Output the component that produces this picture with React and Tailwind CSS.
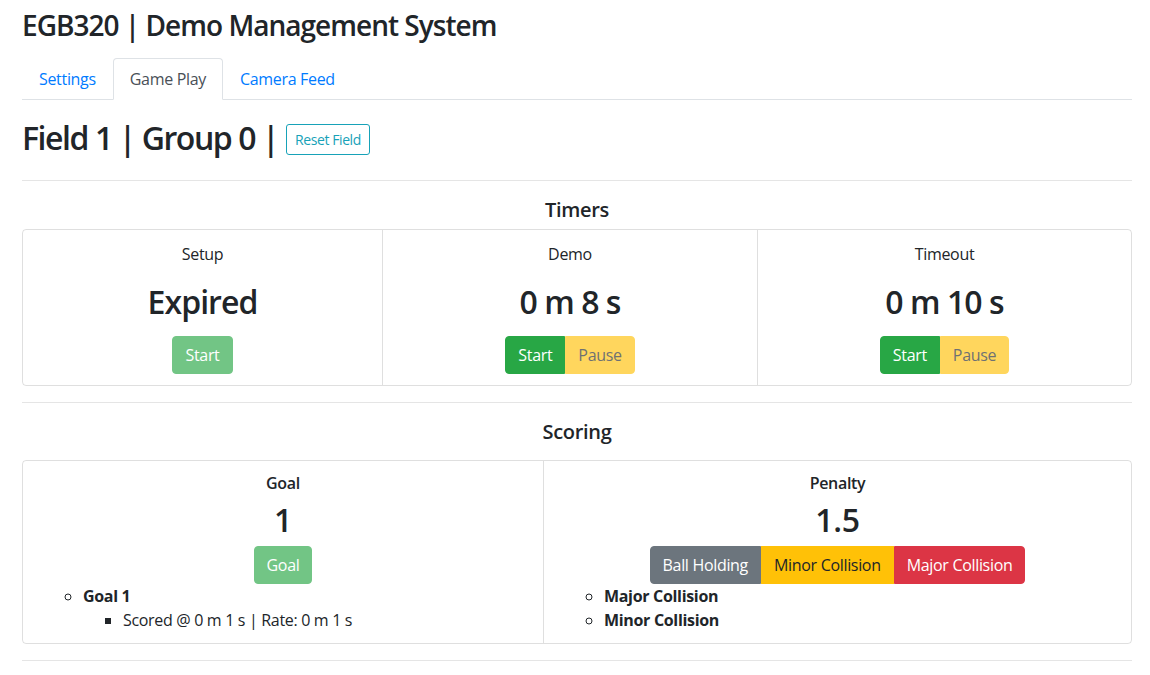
export default function App() {
  const btn = "px-3 py-[6px] text-[16px] leading-6 border";
  return (
    <div className="min-h-screen bg-white text-[#212529] font-['Open_Sans',sans-serif] tracking-[-0.02em]">
      <div className="ml-[22px] w-[1110px] pt-[8px]">
        <h3 className="text-[28px] font-semibold leading-[34px] h-[34px] tracking-[-0.035em]">EGB320 | Demo Management System</h3>
        <nav className="mt-[16px] flex border-b border-[#dee2e6] h-[42px]">
          <a className="px-4 py-2 text-[16px] leading-6 text-[#007bff] border border-transparent rounded-t-[4px] -mb-px">Settings</a>
          <a className="px-4 py-2 text-[16px] leading-6 text-[#495057] bg-white border border-[#dee2e6] border-b-white rounded-t-[4px] -mb-px">Game Play</a>
          <a className="px-4 py-2 text-[16px] leading-6 text-[#007bff] border border-transparent rounded-t-[4px] -mb-px">Camera Feed</a>
        </nav>
        <div className="mt-[19px] flex items-start">
          <h2 className="text-[32px] font-semibold leading-[38px] tracking-[-0.045em]">Field 1 | Group 0 |</h2>
          <button className="ml-[8px] mt-[5px] px-2 py-1 text-[14px] leading-[21px] tracking-[-0.03em] border border-[#17a2b8] text-[#17a2b8] rounded-[3px]">Reset Field</button>
        </div>
        <hr className="mt-[23px] border-t border-[rgba(0,0,0,0.1)]" />
        <h5 className="mt-[17px] text-[20px] leading-6 font-semibold text-center">Timers</h5>
        <div className="mt-[7px] flex border border-[rgba(0,0,0,0.125)] rounded-[4px]">
          <div className="w-[359px] flex flex-col items-center pt-[12px] pb-[11px]">
            <div className="text-[16px] leading-6">Setup</div>
            <h2 className="mt-[17px] text-[32px] font-semibold leading-[38px] tracking-[-0.03em]">Expired</h2>
            <div className="mt-[15px] flex">
              <button className={`${btn} bg-[#28a745] border-[#28a745] text-white rounded-[4px] opacity-[.65]`}>Start</button>
            </div>
          </div>
          <div className="w-[375px] border-l border-[rgba(0,0,0,0.125)] flex flex-col items-center pt-[12px] pb-[11px]">
            <div className="text-[16px] leading-6">Demo</div>
            <h2 className="mt-[17px] text-[32px] font-semibold leading-[38px] tracking-[-0.03em]">0 m 8 s</h2>
            <div className="mt-[15px] flex">
              <button className={`${btn} bg-[#28a745] border-[#28a745] text-white rounded-l-[4px]`}>Start</button>
              <button className={`${btn} bg-[#ffc107] border-[#ffc107] text-[#212529] rounded-r-[4px] opacity-[.65]`}>Pause</button>
            </div>
          </div>
          <div className="flex-1 border-l border-[rgba(0,0,0,0.125)] flex flex-col items-center pt-[12px] pb-[11px]">
            <div className="text-[16px] leading-6">Timeout</div>
            <h2 className="mt-[17px] text-[32px] font-semibold leading-[38px] tracking-[-0.03em]">0 m 10 s</h2>
            <div className="mt-[15px] flex">
              <button className={`${btn} bg-[#28a745] border-[#28a745] text-white rounded-l-[4px]`}>Start</button>
              <button className={`${btn} bg-[#ffc107] border-[#ffc107] text-[#212529] rounded-r-[4px] opacity-[.65]`}>Pause</button>
            </div>
          </div>
        </div>
        <hr className="mt-[16px] border-t border-[rgba(0,0,0,0.1)]" />
        <h5 className="mt-[17px] text-[20px] leading-6 font-semibold text-center">Scoring</h5>
        <div className="mt-[16px] flex border border-[rgba(0,0,0,0.125)] rounded-[4px]">
          <div className="w-[520px] px-5 pt-[10px] pb-[11px]">
            <div className="flex flex-col items-center">
              <h6 className="text-[16px] leading-6 font-semibold">Goal</h6>
              <h2 className="mt-[6px] text-[32px] font-semibold leading-[38px]">1</h2>
              <button className={`mt-[7px] ${btn} bg-[#28a745] border-[#28a745] text-white rounded-[4px] opacity-[.65]`}>Goal</button>
            </div>
            <ul className="pl-10 list-[circle] text-[16px] leading-6">
              <li>
                <b className="font-bold">Goal 1</b>
                <ul className="pl-10 list-[square]">
                  <li>Scored @ 0 m 1 s | Rate: 0 m 1 s</li>
                </ul>
              </li>
            </ul>
          </div>
          <div className="flex-1 border-l border-[rgba(0,0,0,0.125)] px-5 pt-[10px] pb-[11px]">
            <div className="flex flex-col items-center">
              <h6 className="text-[16px] leading-6 font-semibold">Penalty</h6>
              <h2 className="mt-[6px] text-[32px] font-semibold leading-[38px]">1.5</h2>
              <div className="mt-[7px] flex">
                <button className={`${btn} bg-[#6c757d] border-[#6c757d] text-white rounded-l-[4px]`}>Ball Holding</button>
                <button className={`${btn} bg-[#ffc107] border-[#ffc107] text-[#212529]`}>Minor Collision</button>
                <button className={`${btn} bg-[#dc3545] border-[#dc3545] text-white rounded-r-[4px]`}>Major Collision</button>
              </div>
            </div>
            <ul className="pl-10 list-[circle] text-[16px] leading-6">
              <li><b className="font-bold">Major Collision</b></li>
              <li><b className="font-bold">Minor Collision</b></li>
            </ul>
          </div>
        </div>
        <hr className="mt-[16px] border-t border-[rgba(0,0,0,0.1)]" />
      </div>
    </div>
  );
}
